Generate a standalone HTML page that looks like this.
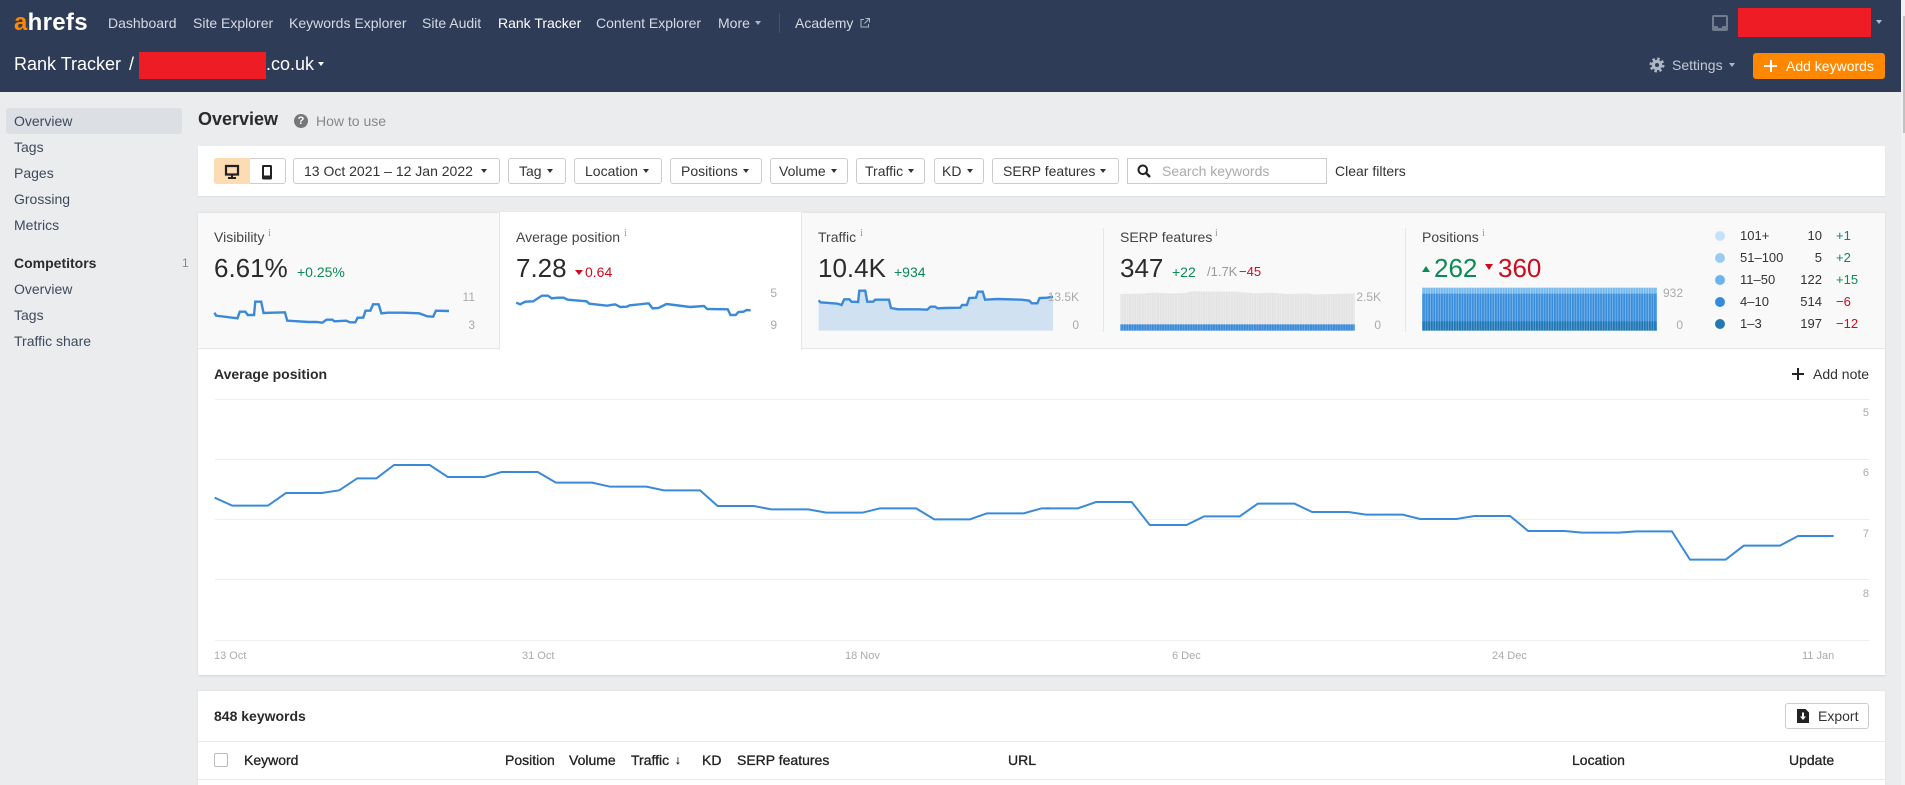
<!DOCTYPE html>
<html lang="en"><head><meta charset="utf-8"><title>Rank Tracker</title>
<style>
html,body{margin:0;padding:0;width:1905px;height:785px;overflow:hidden;background:#ebecee;font-family:"Liberation Sans",Arial,sans-serif;font-size:14px;color:#333}
.a{position:absolute}
.t{position:absolute;white-space:nowrap;line-height:20px;height:20px}
.r{transform:translateX(-100%)}
.n{color:#d5dae3}
.s{color:#3d4a5c}
.b{position:absolute;top:158px;height:24px;background:#fff;border:1px solid #ccc;border-radius:3px;box-sizing:content-box}
.c{position:absolute;width:0;height:0;border-left:3.5px solid transparent;border-right:3.5px solid transparent;border-top:4.500px solid #333}
.g{color:#0b8a55}.d{color:#cc0b1f}
.big{font-size:26px;line-height:30px;height:30px;color:#2b2b2b}
.i{font-size:10px;color:#999;font-family:"Liberation Serif",serif;line-height:10px;height:10px}
.l{font-size:12px;color:#aaa}
.x{font-size:11px;color:#aaa}
.m{font-size:13px;color:#333}
.h{color:#222;-webkit-text-stroke:.3px #222}
svg{position:absolute;overflow:hidden}
</style></head><body>
<!-- page panels -->
<div class="a" style="left:0;top:0;width:1901px;height:92px;background:#2f3c57"></div>
<div class="a" style="left:1901px;top:0;width:4px;height:785px;background:#f1f1f1"></div>
<div class="a" style="left:1903px;top:16px;width:2px;height:117px;background:#c1c1c1"></div>

<!-- nav -->
<div class="t" style="left:14px;top:11px;font-size:24px;font-weight:bold;color:#fff;line-height:24px;height:24px;letter-spacing:.3px"><span style="color:#ff8800">a</span>hrefs</div>
<div class="t n" style="left:108px;top:13px">Dashboard</div>
<div class="t n" style="left:193px;top:13px">Site Explorer</div>
<div class="t n" style="left:289px;top:13px">Keywords Explorer</div>
<div class="t n" style="left:422px;top:13px">Site Audit</div>
<div class="t" style="left:498px;top:13px;color:#fff">Rank Tracker</div>
<div class="t n" style="left:596px;top:13px">Content Explorer</div>
<div class="t n" style="left:718px;top:13px">More</div>
<div class="c" style="left:755px;top:21px;border-top-color:#aeb6c4"></div>
<div class="a" style="left:779px;top:13px;width:1px;height:20px;background:#46526b"></div>
<div class="t n" style="left:795px;top:13px">Academy</div>
<svg style="left:859px;top:17px" width="12" height="12" viewBox="0 0 12 12" fill="none" stroke="#aeb6c4" stroke-width="1"><path d="M5 2.500H2v7.500h7.500V7M6.500 1.500h4v4M10.500 1.500L5.500 6.500"/></svg>

<svg style="left:1712px;top:15px" width="16" height="16" viewBox="0 0 16 16"><rect width="16" height="16" rx="2" fill="#727c8f"/><path d="M2 2h12v9h-3.500l-1 2h-3l-1-2H2z" fill="#2f3c57"/></svg>
<div class="a" style="left:1738px;top:8px;width:133px;height:29px;background:#ee1c25"></div>
<div class="c" style="left:1876px;top:20px;border-top-color:#b5bcc9"></div>

<div class="t" style="left:14px;top:54px;font-size:18px;color:#fff">Rank Tracker</div>
<div class="t" style="left:129px;top:54px;font-size:18px;color:#fff">/</div>
<div class="a" style="left:139px;top:52px;width:127px;height:27px;background:#ee1c25"></div>
<div class="t" style="left:266px;top:54px;font-size:18px;color:#fff">.co.uk</div>
<div class="c" style="left:318px;top:62px;border-top-color:#fff"></div>

<svg style="left:1649px;top:57px" width="16" height="16" viewBox="0 0 16 16"><circle cx="8" cy="8" r="5.300" fill="#aeb6c4"/><circle cx="8" cy="8" r="6" fill="none" stroke="#aeb6c4" stroke-width="3" stroke-dasharray="2.400 2.310"/><circle cx="8" cy="8" r="2" fill="#2f3c57"/></svg>
<div class="t" style="left:1672px;top:55px;color:#c3c9d4">Settings</div>
<div class="c" style="left:1729px;top:63px;border-top-color:#aeb6c4"></div>
<div class="a" style="left:1753px;top:53px;width:132px;height:26px;background:#ff8800;border-radius:3px"></div>
<div class="a" style="left:1764px;top:65px;width:13px;height:2px;background:#fff"></div>
<div class="a" style="left:1770px;top:60px;width:2px;height:12px;background:#fff"></div>
<div class="t" style="left:1786px;top:56px;color:#fff">Add keywords</div>

<!-- sidebar -->
<div class="a" style="left:6px;top:108px;width:176px;height:26px;background:#dcdfe4;border-radius:3px"></div>
<div class="t s" style="left:14px;top:111px">Overview</div>
<div class="t s" style="left:14px;top:137px">Tags</div>
<div class="t s" style="left:14px;top:163px">Pages</div>
<div class="t s" style="left:14px;top:189px">Grossing</div>
<div class="t s" style="left:14px;top:215px">Metrics</div>
<div class="t" style="left:14px;top:253px;font-weight:bold;color:#2b2b2b">Competitors</div>
<div class="t" style="left:182px;top:253px;font-size:12px;color:#888">1</div>
<div class="t s" style="left:14px;top:279px">Overview</div>
<div class="t s" style="left:14px;top:305px">Tags</div>
<div class="t s" style="left:14px;top:331px">Traffic share</div>

<!-- heading -->
<div class="t" style="left:198px;top:109px;font-size:18px;font-weight:bold;color:#2b2b2b">Overview</div>
<div class="a" style="left:294px;top:114px;width:14px;height:14px;border-radius:50%;background:#777;color:#fff;font-size:11px;font-weight:bold;line-height:14px;text-align:center">?</div>
<div class="t" style="left:316px;top:111px;color:#888">How to use</div>

<!-- filters -->
<div class="a" style="left:198px;top:146px;width:1687px;height:50px;background:#fff;box-shadow:0 1px 1px #dcdcdc"></div>
<div class="a" style="left:214px;top:158px;width:70px;height:24px;border:1px solid #ccc;border-radius:3px;background:#fff"></div>
<div class="a" style="left:214px;top:158px;width:36px;height:26px;background:#fddcb4;border-radius:3px 0 0 3px"></div>
<svg style="left:224px;top:164px" width="16" height="16" viewBox="0 0 16 16"><path d="M2 2h12v8.500H2z" fill="none" stroke="#222" stroke-width="2.200"/><path d="M7 11h2v2H7zM4 13h8v2H4z" fill="#222"/></svg>
<svg style="left:259px;top:164px" width="16" height="16" viewBox="0 0 16 16"><rect x="3" y="1" width="10" height="14.500" rx="1.500" fill="#222"/><rect x="5" y="3" width="6" height="8.500" fill="#fff"/></svg>

<div class="b" style="left:293px;width:205px"></div>
<div class="t" style="left:304px;top:161px">13 Oct 2021 – 12 Jan 2022</div><div class="c" style="left:481px;top:169px"></div>
<div class="b" style="left:508px;width:56px"></div>
<div class="t" style="left:519px;top:161px">Tag</div><div class="c" style="left:547px;top:169px"></div>
<div class="b" style="left:574px;width:86px"></div>
<div class="t" style="left:585px;top:161px">Location</div><div class="c" style="left:643px;top:169px"></div>
<div class="b" style="left:670px;width:90px"></div>
<div class="t" style="left:681px;top:161px">Positions</div><div class="c" style="left:743px;top:169px"></div>
<div class="b" style="left:770px;width:76px"></div>
<div class="t" style="left:779px;top:161px">Volume</div><div class="c" style="left:831px;top:169px"></div>
<div class="b" style="left:856px;width:67px"></div>
<div class="t" style="left:865px;top:161px">Traffic</div><div class="c" style="left:908px;top:169px"></div>
<div class="b" style="left:934px;width:48px"></div>
<div class="t" style="left:942px;top:161px">KD</div><div class="c" style="left:967px;top:169px"></div>
<div class="b" style="left:992px;width:125px"></div>
<div class="t" style="left:1003px;top:161px">SERP features</div><div class="c" style="left:1100px;top:169px"></div>
<div class="b" style="left:1127px;width:198px;border-radius:0"></div>
<svg style="left:1137px;top:164px" width="14" height="14" viewBox="0 0 14 14" fill="none" stroke="#222" stroke-width="2"><circle cx="5.800" cy="5.800" r="4.300"/><path d="M9 9l4 4" stroke-width="2.400"/></svg>
<div class="t" style="left:1162px;top:161px;color:#aaa">Search keywords</div>
<div class="t" style="left:1335px;top:161px">Clear filters</div>

<!-- stat panel -->
<div class="a" style="left:198px;top:212px;width:1687px;height:463px;background:#fff;box-shadow:0 1px 2px #d4d4d4"></div>
<div class="a" style="left:198px;top:212px;width:1687px;height:137px;background:#f9f9f9;border-top:1px solid #e6e6e6;border-bottom:1px solid #e6e6e6;box-sizing:border-box"></div>
<div class="a" style="left:499px;top:212px;width:303px;height:138px;background:#fff;border-left:1px solid #e6e6e6;border-right:1px solid #e6e6e6;box-sizing:border-box"></div>
<div class="a" style="left:1103px;top:228px;width:1px;height:104px;background:#e6e6e6"></div>
<div class="a" style="left:1405px;top:228px;width:1px;height:104px;background:#e6e6e6"></div>

<svg width="0" height="0" style="left:0;top:0"><defs>
<pattern id="pg" patternUnits="userSpaceOnUse" width="6.450" height="10"><rect width="6.450" height="10" fill="#efefef"/><rect width="5.200" height="10" fill="#e4e4e4"/></pattern>
<pattern id="pb" patternUnits="userSpaceOnUse" width="6.450" height="10"><rect width="6.450" height="10" fill="#78b0e6"/><rect width="4.800" height="10" fill="#3a8ad8"/></pattern>
<pattern id="p1" patternUnits="userSpaceOnUse" width="7.700" height="10"><rect width="7.700" height="10" fill="#a9d3f3"/><rect width="5.500" height="10" fill="#78baee"/></pattern>
<pattern id="p2" patternUnits="userSpaceOnUse" width="7.700" height="10"><rect width="7.700" height="10" fill="#82baec"/><rect width="5.500" height="10" fill="#3b8edb"/></pattern>
<pattern id="p3" patternUnits="userSpaceOnUse" width="7.700" height="10"><rect width="7.700" height="10" fill="#6ea6d2"/><rect width="5.500" height="10" fill="#1f77b4"/></pattern>
</defs></svg>

<!-- tab texts -->
<div class="t" style="left:214px;top:227px;color:#444">Visibility</div><div class="t i" style="left:268px;top:229px">i</div>
<div class="t big" style="left:214px;top:253px">6.61%</div>
<div class="t g" style="left:297px;top:262px">+0.25%</div>

<div class="t" style="left:516px;top:227px;color:#444">Average position</div><div class="t i" style="left:624px;top:229px">i</div>
<div class="t big" style="left:516px;top:253px">7.28</div>
<div class="a" style="left:575px;top:270px;border-left:4px solid transparent;border-right:4px solid transparent;border-top:5px solid #cc0b1f"></div>
<div class="t d" style="left:585px;top:262px">0.64</div>

<div class="t" style="left:818px;top:227px;color:#444">Traffic</div><div class="t i" style="left:860px;top:229px">i</div>
<div class="t big" style="left:818px;top:253px">10.4K</div>
<div class="t g" style="left:894px;top:262px">+934</div>

<div class="t" style="left:1120px;top:227px;color:#444">SERP features</div><div class="t i" style="left:1215px;top:229px">i</div>
<div class="t big" style="left:1120px;top:253px">347</div>
<div class="t g" style="left:1172px;top:262px">+22</div>
<div class="t" style="left:1207px;top:262px;color:#999;font-size:13px">/1.7K</div>
<div class="t d" style="left:1239px;top:262px;font-size:13px">−45</div>

<div class="t" style="left:1422px;top:227px;color:#444">Positions</div><div class="t i" style="left:1482px;top:229px">i</div>
<div class="a" style="left:1422px;top:266px;border-left:4px solid transparent;border-right:4px solid transparent;border-bottom:6px solid #0b8a55"></div>
<div class="t big" style="left:1434px;top:253px;color:#0b8a55">262</div>
<div class="a" style="left:1485px;top:264px;border-left:4px solid transparent;border-right:4px solid transparent;border-top:6px solid #cc0b1f"></div>
<div class="t big" style="left:1498px;top:253px;color:#cc0b1f">360</div>

<!-- sparklines 1-2 -->
<svg style="left:190px;top:205px" width="620" height="180" viewBox="0 0 1568 540" preserveAspectRatio="none" fill="none" stroke="#3a8ad8" stroke-width="2">
<polyline vector-effect="non-scaling-stroke" stroke-width="2.400" points="62,323 66,332 120,340 126,320 140,320 146,330 162,330 165,290 180,290 186,324 240,322 246,347 300,351 320,351 335,353 345,344 360,344 365,349 395,347 405,352 418,352 424,338 438,338 444,317 456,317 463,298 477,298 484,325 500,323 540,323 580,325 600,334 615,335 622,317 655,318"/>
<polyline vector-effect="non-scaling-stroke" stroke-width="2.400" points="825,293 835,298 848,290 868,289 890,272 905,272 915,280 930,278 945,278 955,284 1003,289 1010,296 1055,302 1075,298 1088,306 1105,305 1112,301 1160,295 1170,310 1185,309 1205,297 1225,300 1265,306 1300,303 1308,312 1360,313 1367,330 1380,330 1387,321 1400,320 1408,315 1418,316"/>
</svg>
<div class="t l r" style="left:475px;top:287px">11</div>
<div class="t l r" style="left:475px;top:315px">3</div>
<div class="t l r" style="left:777px;top:283px">5</div>
<div class="t l r" style="left:777px;top:315px">9</div>

<!-- sparklines 3-4 -->
<svg style="left:800px;top:205px" width="620" height="180" viewBox="0 0 1568 540" preserveAspectRatio="none" fill="none">
<polygon fill="#d0e1f1" points="47,286 52,292 95,296 105,300 112,283 125,283 130,290 147,291 150,257 165,257 170,290 185,290 190,284 225,284 230,309 248,313 300,313 322,314 330,305 342,305 348,310 365,309 405,308 410,300 422,300 428,279 445,278 450,260 462,260 468,284 500,282 560,284 580,287 586,295 600,295 606,279 625,278 640,275 640,377 47,377"/>
<polyline vector-effect="non-scaling-stroke" stroke="#3a8ad8" stroke-width="2.400" points="47,286 52,292 95,296 105,300 112,283 125,283 130,290 147,291 150,257 165,257 170,290 185,290 190,284 225,284 230,309 248,313 300,313 322,314 330,305 342,305 348,310 365,309 405,308 410,300 422,300 428,279 445,278 450,260 462,260 468,284 500,282 560,284 580,287 586,295 600,295 606,279 625,278 640,275"/>
<polygon fill="url(#pg)" points="810,267 860,266 895,263 935,265 975,264 990,259 1100,260 1150,265 1190,263 1230,267 1285,265 1300,268 1403,265 1403,377 810,377"/>
<rect x="810" y="358" width="593" height="19" fill="url(#pb)"/>
</svg>
<div class="t l r" style="left:1079px;top:287px">13.5K</div>
<div class="t l r" style="left:1079px;top:315px">0</div>
<div class="t l r" style="left:1381px;top:287px">2.5K</div>
<div class="t l r" style="left:1381px;top:315px">0</div>

<!-- positions chart -->
<svg style="left:1400px;top:205px" width="505" height="180" viewBox="0 0 1515 540">
<rect x="66" y="248" width="705" height="20" fill="url(#p1)"/>
<rect x="66" y="266" width="705" height="84" fill="url(#p2)"/>
<rect x="66" y="349" width="705" height="28" fill="url(#p3)"/>
</svg>
<div class="t l r" style="left:1683px;top:283px">932</div>
<div class="t l r" style="left:1683px;top:315px">0</div>

<!-- legend -->
<div class="a" style="left:1715px;top:231px;width:10px;height:10px;border-radius:50%;background:#c4e2f9"></div>
<div class="a" style="left:1715px;top:253px;width:10px;height:10px;border-radius:50%;background:#9accf2"></div>
<div class="a" style="left:1715px;top:275px;width:10px;height:10px;border-radius:50%;background:#6db3ec"></div>
<div class="a" style="left:1715px;top:297px;width:10px;height:10px;border-radius:50%;background:#348bd9"></div>
<div class="a" style="left:1715px;top:319px;width:10px;height:10px;border-radius:50%;background:#2178b5"></div>
<div class="t m" style="left:1740px;top:226px">101+</div><div class="t m r" style="left:1822px;top:226px">10</div><div class="t m g" style="left:1836px;top:226px;color:#0b8a55">+1</div>
<div class="t m" style="left:1740px;top:248px">51–100</div><div class="t m r" style="left:1822px;top:248px">5</div><div class="t m g" style="left:1836px;top:248px;color:#0b8a55">+2</div>
<div class="t m" style="left:1740px;top:270px">11–50</div><div class="t m r" style="left:1822px;top:270px">122</div><div class="t m g" style="left:1836px;top:270px;color:#0b8a55">+15</div>
<div class="t m" style="left:1740px;top:292px">4–10</div><div class="t m r" style="left:1822px;top:292px">514</div><div class="t m d" style="left:1836px;top:292px;color:#cc0b1f">−6</div>
<div class="t m" style="left:1740px;top:314px">1–3</div><div class="t m r" style="left:1822px;top:314px">197</div><div class="t m d" style="left:1836px;top:314px;color:#cc0b1f">−12</div>

<!-- main chart -->
<div class="t" style="left:214px;top:364px;font-weight:bold;color:#2b2b2b">Average position</div>
<div class="a" style="left:1792px;top:373px;width:12px;height:2px;background:#222"></div>
<div class="a" style="left:1797px;top:368px;width:2px;height:12px;background:#222"></div>
<div class="t" style="left:1813px;top:364px;color:#333">Add note</div>

<div class="a" style="left:215px;top:399px;width:1654px;height:1px;background:#eee"></div>
<div class="a" style="left:215px;top:459px;width:1654px;height:1px;background:#eee"></div>
<div class="a" style="left:215px;top:519px;width:1654px;height:1px;background:#eee"></div>
<div class="a" style="left:215px;top:579px;width:1654px;height:1px;background:#eee"></div>
<div class="a" style="left:215px;top:640px;width:1654px;height:1px;background:#eee"></div>

<svg style="left:190px;top:380px" width="860" height="300" viewBox="0 0 1568 900" preserveAspectRatio="none" fill="none" stroke="#3a8ad8" stroke-width="2">
<polyline vector-effect="non-scaling-stroke" points="45,353 77,377 142,377 175,339 240,339 272,331 305,295 340,295 372,255 437,255 470,291 537,291 568,276 634,276 667,308 733,308 766,320 832,320 864,331 930,331 962,378 1028,378 1060,388 1127,388 1160,398 1226,398 1258,385 1324,385 1357,418 1422,418 1453,400 1520,400 1553,385 1568,385"/>
</svg>
<svg style="left:1045px;top:380px" width="860" height="300" viewBox="0 0 1568 900" preserveAspectRatio="none" fill="none" stroke="#3a8ad8" stroke-width="2">
<polyline vector-effect="non-scaling-stroke" points="-6,385 60,385 93,366 158,366 191,435 258,435 290,409 355,409 388,371 455,371 487,396 553,396 585,404 652,404 684,417 750,417 783,408 848,408 881,453 947,453 979,458 1046,458 1078,454 1143,454 1176,539 1241,539 1274,497 1340,497 1373,468 1438,468"/>
</svg>

<div class="t x r" style="left:1869px;top:403px">5</div>
<div class="t x r" style="left:1869px;top:463px">6</div>
<div class="t x r" style="left:1869px;top:524px">7</div>
<div class="t x r" style="left:1869px;top:584px">8</div>
<div class="t x" style="left:214px;top:646px">13 Oct</div>
<div class="t x" style="left:522px;top:646px">31 Oct</div>
<div class="t x" style="left:845px;top:646px">18 Nov</div>
<div class="t x" style="left:1172px;top:646px">6 Dec</div>
<div class="t x" style="left:1492px;top:646px">24 Dec</div>
<div class="t x" style="left:1802px;top:646px">11 Jan</div>

<!-- table -->
<div class="a" style="left:198px;top:691px;width:1687px;height:94px;background:#fff;box-shadow:0 0 2px #d8d8d8"></div>
<div class="t" style="left:214px;top:706px;font-weight:bold;color:#2b2b2b">848 keywords</div>
<div class="a" style="left:1785px;top:703px;width:82px;height:24px;border:1px solid #ccc;border-radius:3px;background:#fff"></div>
<svg style="left:1797px;top:709px" width="12" height="14" viewBox="0 0 12 14"><path d="M0 0h8.500L12 3.500V14H0z" fill="#222"/><path d="M5 3.500h2v4h2L6 11 3 7.500h2z" fill="#fff"/></svg>
<div class="t" style="left:1818px;top:706px">Export</div>
<div class="a" style="left:198px;top:741px;width:1687px;height:1px;background:#e8e8e8"></div>
<div class="a" style="left:198px;top:779px;width:1687px;height:1px;background:#e8e8e8"></div>
<div class="a" style="left:214px;top:753px;width:12px;height:12px;border:1px solid #bbb;border-radius:2px"></div>
<div class="t h" style="left:244px;top:750px">Keyword</div>
<div class="t h" style="left:505px;top:750px">Position</div>
<div class="t h" style="left:569px;top:750px">Volume</div>
<div class="t h" style="left:631px;top:750px">Traffic</div>
<div class="t h" style="left:675px;top:750px;font-size:12px">↓</div>
<div class="t h" style="left:702px;top:750px">KD</div>
<div class="t h" style="left:737px;top:750px">SERP features</div>
<div class="t h" style="left:1008px;top:750px">URL</div>
<div class="t h" style="left:1572px;top:750px">Location</div>
<div class="t h" style="left:1789px;top:750px">Update</div>
</body></html>
